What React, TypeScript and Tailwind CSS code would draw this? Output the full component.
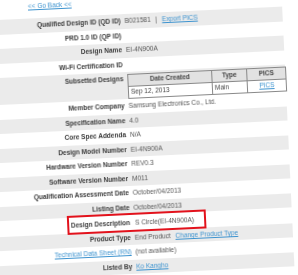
import React from 'react'

type Row = {
  label: string
  value?: React.ReactNode
  gray: boolean
  labelLink?: boolean
}

function Link({ children }: { children: React.ReactNode }) {
  return <span className="text-[#3d93cf] underline underline-offset-[1px]">{children}</span>
}

const top: Row[] = [
  {
    label: 'Qualified Design ID (QD ID)',
    gray: true,
    value: (
      <>
        B021581 <span className="mx-[3px]">|</span> <Link>Export PICS</Link>
      </>
    ),
  },
  { label: 'PRD 1.0 ID (QP ID)', gray: false },
  { label: 'Design Name', value: 'EI-4N900A', gray: true },
  { label: 'Wi-Fi Certification ID', gray: false },
]

const middle: Row[] = [
  { label: 'Member Company', value: 'Samsung Electronics Co., Ltd.', gray: false },
  { label: 'Specification Name', value: '4.0', gray: true },
  { label: 'Core Spec Addenda', value: 'N/A', gray: false },
  { label: 'Design Model Number', value: 'EI-4N900A', gray: true },
  { label: 'Hardware Version Number', value: 'REV0.3', gray: false },
  { label: 'Software Version Number', value: 'M011', gray: true },
  { label: 'Qualification Assessment Date', value: 'October/04/2013', gray: false },
  { label: 'Listing Date', value: 'October/04/2013', gray: true },
]

const bottom: Row[] = [
  {
    label: 'Product Type',
    gray: true,
    value: (
      <>
        End Product <span className="ml-[3px]"><Link>Change Product Type</Link></span>
      </>
    ),
  },
  { label: 'Technical Data Sheet (RN)', value: '(not available)', gray: false, labelLink: true },
  { label: 'Listed By', value: <Link>Ko Kangho</Link>, gray: true },
]

function InfoRow({ row }: { row: Row }) {
  return (
    <div className={`flex h-[14.5px] items-center ${row.gray ? 'bg-[#ebebeb]' : ''}`}>
      <div
        className={`w-[138px] shrink-0 text-right ${
          row.labelLink ? 'font-normal' : 'font-bold text-[#3a3a3a]'
        }`}
      >
        {row.labelLink ? <Link>{row.label}</Link> : row.label}
      </div>
      <div className="pl-[4px] text-[#555] whitespace-nowrap">{row.value}</div>
    </div>
  )
}

export default function App() {
  return (
    <div className="h-[275px] w-[298px] overflow-hidden bg-white">
      <div className="-ml-[12px] w-[300px] origin-[161px_137px] -rotate-[2.7deg] blur-[0.3px] font-['Liberation_Sans',Arial,sans-serif] text-[6.5px] leading-none">
        <div className="-mt-[3px] h-[16.4px] pl-[46px] leading-[7px]">
          <Link>&lt;&lt; Go Back &lt;&lt;</Link>
        </div>

        {top.map((r) => (
          <InfoRow key={r.label} row={r} />
        ))}

        <div className="flex h-[27px] items-start bg-[#ebebeb]">
          <div className="w-[138px] shrink-0 pt-[4px] text-right font-bold text-[#3a3a3a]">
            Subsetted Designs
          </div>
          <div className="pl-[4px] pt-[1.5px]">
            <table className="w-[159px] border-collapse border border-[#666] bg-white text-[#444]">
              <thead>
                <tr className="h-[12px] bg-[#e2e2e2]">
                  <th className="w-[84px] border border-[#888] font-bold">Date Created</th>
                  <th className="w-[35px] border border-[#888] font-bold">Type</th>
                  <th className="border border-[#888] font-bold">PICS</th>
                </tr>
              </thead>
              <tbody>
                <tr className="h-[12px]">
                  <td className="border border-[#888] px-[2px] text-left">Sep 12, 2013</td>
                  <td className="border border-[#888] px-[2px] text-left">Main</td>
                  <td className="border border-[#888] text-center">
                    <Link>PICS</Link>
                  </td>
                </tr>
              </tbody>
            </table>
          </div>
        </div>

        {middle.map((r) => (
          <InfoRow key={r.label} row={r} />
        ))}

        <div className="relative flex h-[15.5px] items-center">
          <div className="w-[138px] shrink-0 text-right font-bold text-[#3a3a3a]">Design Description</div>
          <div className="pl-[5px] text-[#555]">S Circle(EI-4N900A)</div>
          <div className="absolute -top-[2px] -bottom-[1.5px] left-[75px] w-[139px] border-2 border-[#e2121c]" />
        </div>

        {bottom.map((r) => (
          <InfoRow key={r.label} row={r} />
        ))}
      </div>
    </div>
  )
}
